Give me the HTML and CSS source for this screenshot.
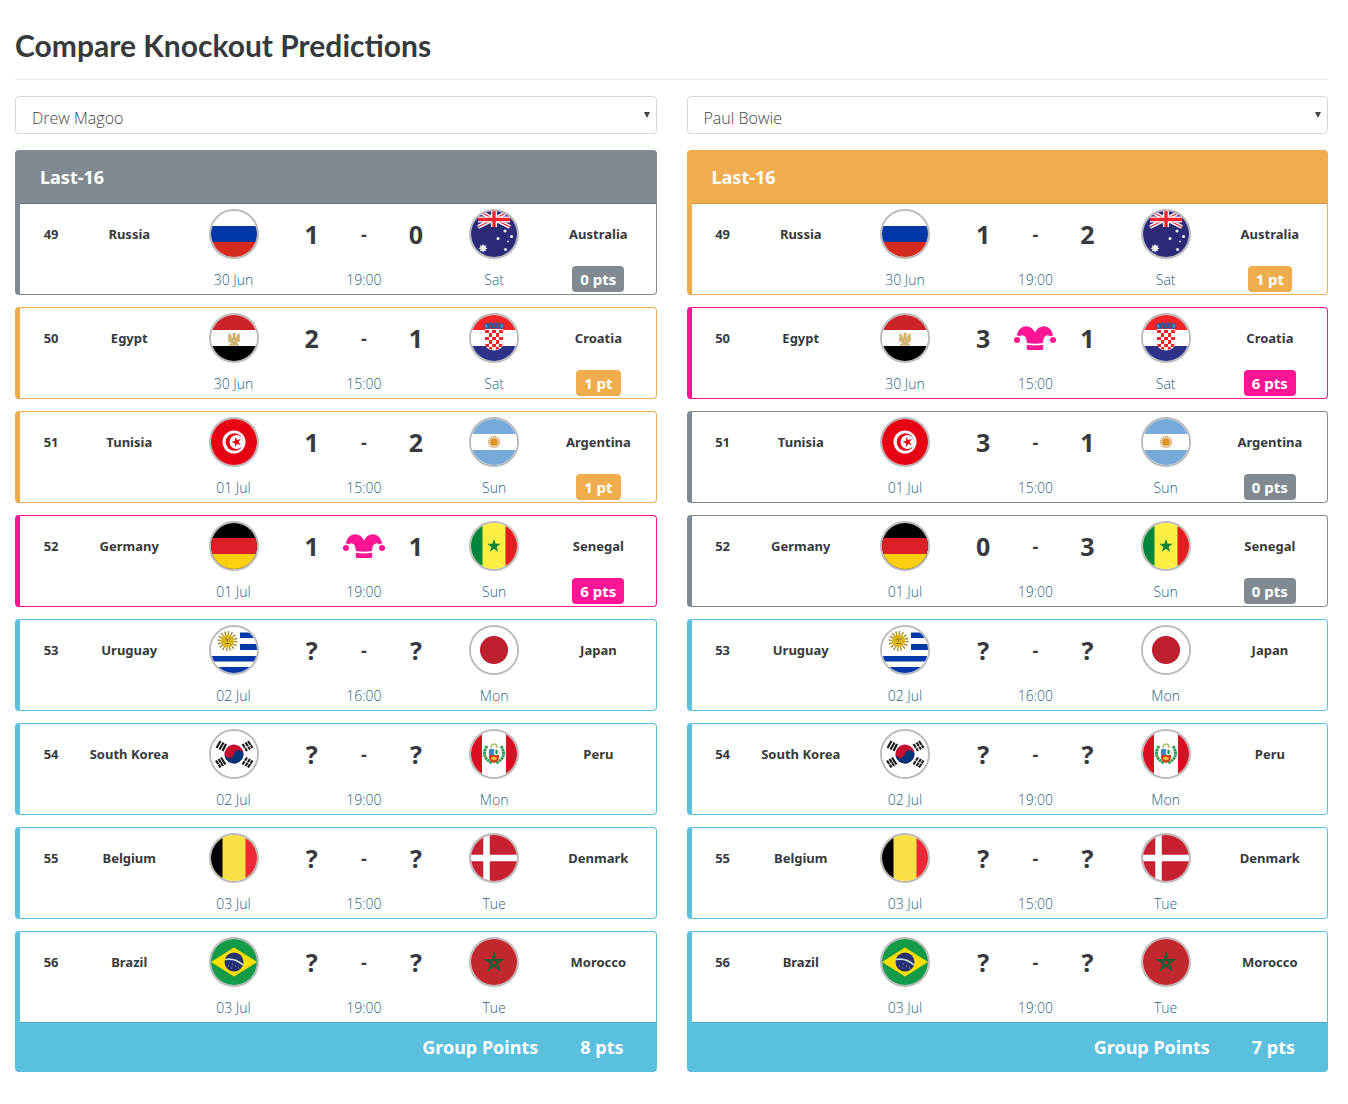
FILE: index.html
```html
<!DOCTYPE html>
<html lang="en">
<head>
    <meta charset="UTF-8">
    <meta name="viewport" content="width=device-width, initial-scale=1.0">
    <title>Compare Knockout Predictions</title>
    <link rel="stylesheet" href="styles.css">
</head>
<body>
    <!-- Flags and icons -->
    <svg class="sprite" aria-hidden="true">
        <symbol id="flag-russia" viewBox="0 0 46 46">
            <rect width="46" height="46" fill="#fff"/>
            <rect y="15" width="46" height="16" fill="#0037a5"/>
            <rect y="31" width="46" height="15" fill="#d52b1e"/>
        </symbol>
        <symbol id="flag-australia" viewBox="0 0 46 46">
            <rect width="46" height="46" fill="#2a2a78"/>
            <path d="M7 0L39 16M39 0L7 16" stroke="#fff" stroke-width="4"/>
            <path d="M7 0L39 16M39 0L7 16" stroke="#ee2436" stroke-width="1.2"/>
            <path d="M23 0V16M7 8.500H39" stroke="#fff" stroke-width="6"/>
            <path d="M23 0V16M7 8.500H39" stroke="#ee2430" stroke-width="3.400"/>
            <path d="M12 32.500l.9 2.400 2.400-.9-1 2.300 2.300 1-2.300.9 1 2.400-2.400-1-.9 2.400-.9-2.400-2.400 1 1-2.400-2.300-.9 2.300-1-1-2.300 2.400.9z" fill="#fff"/>
            <g fill="#e8e8f4">
                <circle cx="34" cy="20" r="1.600"/>
                <circle cx="27" cy="27.500" r="1.600"/>
                <circle cx="40.500" cy="25.500" r="1.600"/>
                <circle cx="34.500" cy="38.500" r="1.600"/>
                <circle cx="37" cy="30.500" r=".9"/>
            </g>
        </symbol>
        <symbol id="flag-egypt" viewBox="0 0 46 46">
            <rect width="46" height="46" fill="#fbfbfb"/>
            <rect width="46" height="15" fill="#cc2229"/>
            <rect y="31" width="46" height="15" fill="#000"/>
            <path d="M17 18l3 1.500 1.500 2.500v-3l1.500-2 2 1.500-.5 1.500v2l1.500-2.500 3-1.500v9l-3 .5 2 2.500h-10l2-2.500-3-.5z" fill="#dcc38a"/>
            <path d="M23 18v6M21 24h4v4h-4zM18 30h10M19 20v6M27 20v6" fill="none" stroke="#c6a45a"/>
        </symbol>
        <symbol id="flag-croatia" viewBox="0 0 46 46">
            <rect width="46" height="46" fill="#fff"/>
            <rect width="46" height="15" fill="#f12529"/>
            <rect y="31" width="46" height="15" fill="#2d3188"/>
            <path d="M14 14h18v13q0 8-9 8.500q-9-.5-9-8.500z" fill="#fff"/>
            <path d="M14 15h4v3h-4zM21 15h4v3h-4zM28 15h4v3h-4zM18 18h3v4h-3zM25 18h3v4h-3zM14 22h4v3h-4zM21 22h4v3h-4zM28 22h4v3h-4zM18 25h3v4h-3zM25 25h3v4h-3zM14 29h4v3h-3zM21 29h4v3h-4zM28 29h3.500l-1 3h-2.500zM18 32h3v3l-3-1.500zM25 32h3v1.500l-3 1.500z" fill="#f12529"/>
            <path d="M13 9l2-1 2 1 2.500-2 1.500 1.500 2-1.500 2 1.500 1.500-1.500 2.500 2 2-1 2 1-1.500 5q-8.500-1.500-17 0z" fill="#2d5592"/>
            <path d="M14.500 9.500l1.500 3M31.500 9.500l-1.500 3" stroke="#2fa3d8" stroke-width="2"/>
            <path d="M19 9v4M23 8v4M27 9v4" stroke="#9b3258" stroke-width="1.300"/>
        </symbol>
        <symbol id="flag-tunisia" viewBox="0 0 46 46">
            <rect width="46" height="46" fill="#e70013"/>
            <circle cx="23" cy="23" r="11.500" fill="#fff"/>
            <circle cx="23.500" cy="23" r="8.800" fill="#e70013"/>
            <circle cx="25.500" cy="23" r="7" fill="#fff"/>
            <path d="M20.500 23l3.500-1.200v-3.600l2.200 2.900 3.500-1.100-2.100 3 2.100 3-3.500-1.100-2.200 2.900v-3.600z" fill="#e70013"/>
        </symbol>
        <symbol id="flag-argentina" viewBox="0 0 46 46">
            <rect width="46" height="46" fill="#fff"/>
            <rect width="46" height="15" fill="#75aadb"/>
            <rect y="31" width="46" height="15" fill="#75aadb"/>
            <circle cx="23" cy="23" r="5" fill="none" stroke="#d9ad79" stroke-width="2.500" stroke-dasharray="1.400 .6"/>
            <circle cx="23" cy="23" r="3.800" fill="#e59b1c"/>
            <circle cx="23" cy="23" r="2.500" fill="none" stroke="#bd7a22" stroke-width=".7"/>
        </symbol>
        <symbol id="flag-germany" viewBox="0 0 46 46">
            <rect width="46" height="46" fill="#000"/>
            <rect y="15" width="46" height="16" fill="#dc2027"/>
            <rect y="31" width="46" height="15" fill="#ffd010"/>
        </symbol>
        <symbol id="flag-senegal" viewBox="0 0 46 46">
            <rect width="46" height="46" fill="#fdef42"/>
            <rect width="11.500" height="46" fill="#00853f"/>
            <rect x="34.500" width="11.500" height="46" fill="#e31b23"/>
            <path d="M23 16l1.600 4.800h5l-4 3.100 1.500 4.900-4.100-3-4.100 3 1.500-4.900-4-3.100h5z" fill="#00853f"/>
        </symbol>
        <symbol id="flag-uruguay" viewBox="0 0 46 46">
            <rect width="46" height="46" fill="#fff"/>
            <path d="M29 5.500h17v5.500H29zM29 17h17v6H29zM0 29h46v5.500H0zM0 40h46v6H0z" fill="#0038a8"/>
            <circle cx="16.500" cy="14" r="7.500" fill="none" stroke="#a8862c" stroke-width="5" stroke-dasharray="1.200 1.745"/>
            <circle cx="16.500" cy="14" r="6.500" fill="#d9b51e"/>
            <path d="M14 12h2M17.500 12h2M16.500 12.500v2M14.500 16.500h4" stroke="#8e6d1b"/>
        </symbol>
        <symbol id="flag-japan" viewBox="0 0 46 46">
            <rect width="46" height="46" fill="#fff"/>
            <circle cx="23" cy="23" r="14" fill="#be1f2e"/>
        </symbol>
        <symbol id="flag-south-korea" viewBox="0 0 46 46">
            <rect width="46" height="46" fill="#fff"/>
            <g transform="rotate(10 23 23)">
                <circle cx="23" cy="23" r="9.500" fill="#c60c30"/>
                <path d="M13.500 23a4.750 4.750 0 0 0 9.500 0a4.750 4.750 0 0 1 9.500 0a9.500 9.500 0 0 1-19 0z" fill="#003478"/>
            </g>
            <g stroke="#1b1b1b" stroke-width="2.200">
                <path d="M5.500 17l4-7M8.500 18.500l4-7M11.500 20l3.500-7"/>
                <path d="M34.500 11.500l4.500 7M37 10l4.500 7M31.500 13l4.500 7"/>
                <path d="M5 29.500l4.500 7M7.500 28l4.500 7M10 26.500l4.500 7"/>
                <path d="M34.500 35l4.500-7M37 36.500l4.500-7M31.500 33.500l4.500-7"/>
            </g>
            <path d="M32 18l8-4M32 29l8 4M6 34l4-2" stroke="#fff" stroke-width=".8"/>
        </symbol>
        <symbol id="flag-peru" viewBox="0 0 46 46">
            <rect width="46" height="46" fill="#fff"/>
            <rect width="11" height="46" fill="#d91023"/>
            <rect x="35" width="11" height="46" fill="#d91023"/>
            <path d="M16 15q-7 11 5 17M30 15q7 11-5 17" fill="none" stroke="#2f9e55" stroke-width="3" stroke-dasharray="2.500 .5"/>
            <path d="M20 17v-2q3-4 6 0v2" fill="none" stroke="#a9bf6a" stroke-width="1.500"/>
            <path d="M18 18h5v6h-5z" fill="#3d86bd"/>
            <path d="M23 18h5v6h-5z" fill="#e9f0e0"/>
            <path d="M18 24h10v3q-1 4-5 5q-4-1-5-5z" fill="#dc3a20"/>
            <path d="M20 27q3-3 6 0q0 2-3 2t-3-2z" fill="#f3bd2e"/>
            <path d="M25.500 19v4" stroke="#268a43" stroke-width="2"/>
        </symbol>
        <symbol id="flag-belgium" viewBox="0 0 46 46">
            <rect width="46" height="46" fill="#fae042"/>
            <rect width="11.500" height="46" fill="#000"/>
            <rect x="34.500" width="11.500" height="46" fill="#ed2939"/>
        </symbol>
        <symbol id="flag-denmark" viewBox="0 0 46 46">
            <rect width="46" height="46" fill="#c72031"/>
            <path d="M15.500 0v46M0 23h46" stroke="#fff" stroke-width="6.500"/>
        </symbol>
        <symbol id="flag-brazil" viewBox="0 0 46 46">
            <rect width="46" height="46" fill="#149b47"/>
            <path d="M0 23L23 8.500L46 23L23 37.500z" fill="#fedf00"/>
            <circle cx="23" cy="23" r="9.500" fill="#262f70"/>
            <path d="M14 20.500q10-2 18 5.500" fill="none" stroke="#c9dce0" stroke-width="1.600"/>
            <path d="M17 27h1M20 29h1M24 27h1M27 29h1M21 25h1" stroke="#97a0c4"/>
        </symbol>
        <symbol id="flag-morocco" viewBox="0 0 46 46">
            <rect width="46" height="46" fill="#c1272d"/>
            <path d="M23 15.500l4.700 14.500-12.300-9h15.200L18.300 30z" fill="none" stroke="#1d5a30" stroke-width="2"/>
        </symbol>
        <symbol id="icon-joker" viewBox="0 0 42 24">
            <circle cx="3" cy="14" r="3"/>
            <circle cx="39" cy="14" r="3"/>
            <path d="M2.800 9.500C4 4 7.500.3 12 .3c4 0 6.800 2.200 9 6.200C23.200 2.500 26 .3 30 .3c4.500 0 8 3.700 9.200 9.200-1.200 0-2.200.3-3 1-1-.9-2-1.300-3.200-1.100-2.500.4-3.700 2.600-3.900 7.700q-8.100 1.200-16.200 0C12.500 12 11.500 9.800 9 9.400c-1.200-.2-2.200.2-3.200 1.100-.8-.7-1.800-1-3-1z"/>
            <path d="M12.800 18.800q8.200 1.400 16.400 0v4q0 1.200-1.200 1.200h-14q-1.200 0-1.200-1.200z"/>
        </symbol>
    </svg>

    <div class="container">
        <h1>Compare Knockout Predictions</h1>

        <div class="players">
            <section class="player">
                <div class="select-box">
                    <select id="player1" aria-label="First player">
                        <option>Drew Magoo</option>
                        <option>Paul Bowie</option>
                    </select>
                </div>
                <div class="group" id="group1"></div>
            </section>

            <section class="player">
                <div class="select-box">
                    <select id="player2" aria-label="Second player">
                        <option>Drew Magoo</option>
                        <option selected>Paul Bowie</option>
                    </select>
                </div>
                <div class="group" id="group2"></div>
            </section>
        </div>
    </div>

    <script>
        const matches = [
            { id: 49, home: 'Russia', away: 'Australia', date: '30 Jun', time: '19:00', day: 'Sat' },
            { id: 50, home: 'Egypt', away: 'Croatia', date: '30 Jun', time: '15:00', day: 'Sat' },
            { id: 51, home: 'Tunisia', away: 'Argentina', date: '01 Jul', time: '15:00', day: 'Sun' },
            { id: 52, home: 'Germany', away: 'Senegal', date: '01 Jul', time: '19:00', day: 'Sun' },
            { id: 53, home: 'Uruguay', away: 'Japan', date: '02 Jul', time: '16:00', day: 'Mon' },
            { id: 54, home: 'South Korea', away: 'Peru', date: '02 Jul', time: '19:00', day: 'Mon' },
            { id: 55, home: 'Belgium', away: 'Denmark', date: '03 Jul', time: '15:00', day: 'Tue' },
            { id: 56, home: 'Brazil', away: 'Morocco', date: '03 Jul', time: '19:00', day: 'Tue' }
        ];

        // one entry per played match: home score, away score, points, joker used
        const predictions1 = [[1, 0, 0], [2, 1, 1], [1, 2, 1], [1, 1, 6, true]];
        const predictions2 = [[1, 2, 1], [3, 1, 6, true], [3, 1, 0], [0, 3, 0]];

        function pointsText(points) {
            return points + (points === 1 ? ' pt' : ' pts');
        }

        function statusOf(prediction) {
            if (!prediction) return 'pending';
            if (prediction[3]) return 'joker';
            return prediction[2] > 0 ? 'result' : 'missed';
        }

        function flag(team) {
            const id = team.toLowerCase().replace(' ', '-');
            return `<svg class="flag" role="img" aria-label="${team}"><use href="#flag-${id}"/></svg>`;
        }

        function renderMatch(match, prediction) {
            const [home, away, points, joker] = prediction || ['?', '?'];
            const middle = joker ? '<svg class="joker-icon"><use href="#icon-joker"/></svg>' : '-';
            const badge = prediction ? `<span class="badge">${pointsText(points)}</span>` : '';

            return `
                <div class="match">
                    <div class="match-row teams">
                        <span>${match.id}</span>
                        <span>${match.home}</span>
                        ${flag(match.home)}
                        <span class="score">${home}</span>
                        <span class="versus">${middle}</span>
                        <span class="score">${away}</span>
                        ${flag(match.away)}
                        <span>${match.away}</span>
                    </div>
                    <div class="match-row details">
                        <span class="date">${match.date}</span>
                        <span class="time">${match.time}</span>
                        <span class="day">${match.day}</span>
                        <span class="points">${badge}</span>
                    </div>
                </div>
            `;
        }

        function renderGroup(id, predictions) {
            const total = predictions.reduce((sum, p) => sum + p[2], 0);
            const last = matches.length - 1;

            document.getElementById(id).innerHTML = matches.map((match, i) => {
                const header = i === 0 ? '<h2 class="card-header">Last-16</h2>' : '';
                const footer = i === last
                    ? `<div class="card-footer"><span>Group Points</span><span>${pointsText(total)}</span></div>`
                    : '';
                return `<div class="card ${statusOf(predictions[i])}">${header}${renderMatch(match, predictions[i])}${footer}</div>`;
            }).join('');
        }

        renderGroup('group1', predictions1);
        renderGroup('group2', predictions2);
    </script>
</body>
</html>
```

FILE: styles.css
```css
* {
    box-sizing: border-box;
}

body {
    margin: 0;
    font-family: "Noto Sans", "Open Sans", sans-serif;
    font-size: 14px;
    color: #373a3c;
    background-color: #fff;
}

.sprite {
    display: none;
}

.container {
    padding: 27px 20px 32px 15px;
}

h1 {
    margin: 0 0 16px;
    padding-bottom: 16px;
    border-bottom: 1px solid #e5e5e5;
    font-family: Lato, sans-serif;
    font-size: 30px;
    font-weight: bold;
    line-height: 36px;
}

.players {
    display: grid;
    grid-template-columns: 1fr 1fr;
    gap: 30px;
}

.select-box {
    position: relative;
    margin-bottom: 16px;
}

.select-box::after {
    content: "";
    position: absolute;
    top: 16px;
    right: 7px;
    border: 3px solid transparent;
    border-top: 6px solid #444;
    border-bottom: 0;
    pointer-events: none;
}

select {
    display: block;
    width: 100%;
    height: 38px;
    padding: 5px 16px 0;
    border: 1px solid #d5d7d9;
    border-radius: 4px;
    appearance: none;
    background-color: #fff;
    color: #3f4346;
    font-family: "Open Sans", sans-serif;
    font-size: 16px;
    font-weight: 300;
}

.group {
    display: flex;
    flex-direction: column;
    gap: 12px;
}

.card {
    --status: #5bc0de;
    border: 1px solid var(--status);
    border-left-width: 5px;
    border-radius: 4px;
}

.card.missed {
    --status: #818a91;
}

.card.result {
    --status: #f0ad4e;
}

.card.joker {
    --status: #ff1493;
}

.card-header,
.card-footer {
    background-color: var(--status);
    color: #fff;
    font-size: 18px;
    font-weight: bold;
}

.card-header {
    margin: 0;
    padding: 14px 20px;
    border-bottom: 1px solid rgba(0, 0, 0, 0.125);
    line-height: 24px;
}

.card-footer {
    display: flex;
    justify-content: flex-end;
    gap: 42px;
    padding: 12px 32px;
    border-top: 1px solid rgba(0, 0, 0, 0.125);
    line-height: 24px;
}

.match {
    padding: 5px 5px 2px;
}

.match-row {
    display: grid;
    grid-template-columns: repeat(12, minmax(0, 1fr));
    align-items: center;
    justify-items: center;
    text-align: center;
}

.teams {
    height: 50px;
    margin-bottom: 7px;
    font-size: 13px;
    font-weight: bold;
}

.teams > :nth-child(2),
.teams > :nth-child(3),
.teams > :nth-child(7),
.teams > :nth-child(8) {
    grid-column: span 2;
}

.details {
    height: 26px;
    font-family: "Open Sans", sans-serif;
    font-weight: 300;
    color: #1f5f85;
}

.date {
    grid-column: 4 / span 2;
}

.time {
    grid-column: 7;
}

.day {
    grid-column: 9 / span 2;
}

.points {
    grid-column: 11 / span 2;
}

.flag {
    width: 50px;
    height: 50px;
    border: 2px solid #bbb;
    border-radius: 50%;
}

.score {
    font-size: 25px;
}

.versus {
    font-size: 18px;
}

.joker-icon {
    display: block;
    width: 42px;
    height: 24px;
    fill: #ff1493;
}

.badge {
    display: block;
    padding: 0 8px;
    border-radius: 4px;
    background-color: var(--status);
    color: #fff;
    font-family: "Noto Sans", sans-serif;
    font-size: 15px;
    font-weight: bold;
    line-height: 26px;
}
```
